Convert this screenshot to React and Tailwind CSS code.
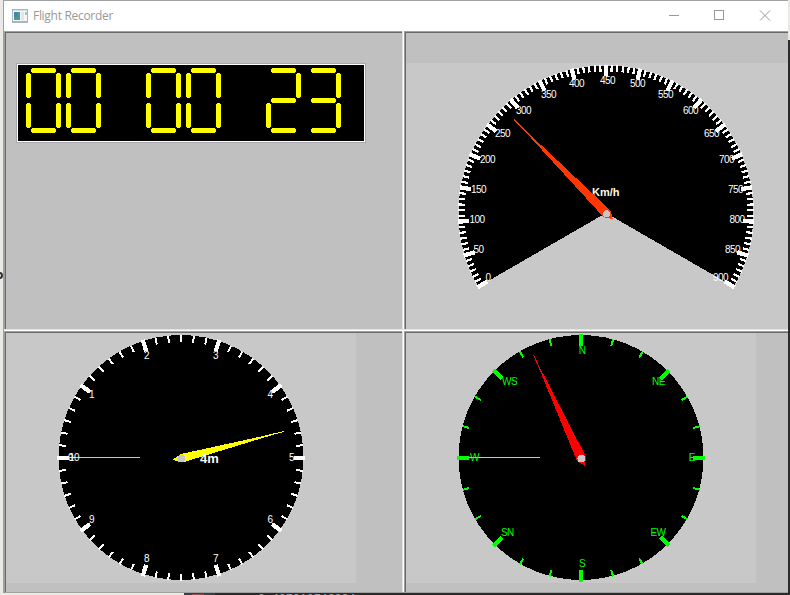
import React from "react";

const rad = (deg) => (deg * Math.PI) / 180;

// Angles are measured clockwise from "pointing left".
function polar(cx, cy, r, deg) {
  return [cx - r * Math.cos(rad(deg)), cy - r * Math.sin(rad(deg))];
}

function Ticks({ cx, cy, start, step, count, every, color, minor, major, minorWidth = 2 }) {
  return Array.from({ length: count }, (_, i) => {
    const isMajor = i % every === 0;
    const a = start + i * step;
    const [outer, inner] = isMajor ? major : minor;
    const [x1, y1] = polar(cx, cy, outer, a);
    const [x2, y2] = polar(cx, cy, inner, a);
    return (
      <line key={i} x1={x1} y1={y1} x2={x2} y2={y2} stroke={color} strokeWidth={isMajor ? 4.3 : minorWidth} />
    );
  });
}

function Labels({ items, color }) {
  return items.map(([text, x, y]) => (
    <text key={text} x={x} y={y} fill={color} className="text-[10px] tracking-[-0.56px]">
      {text}
    </text>
  ));
}

const FONT = "font-['Liberation_Sans',Arial,sans-serif]";

const SPEED_LABELS = [
  ["0", 485.5, 281], ["50", 473.5, 253], ["100", 469.5, 223], ["150", 471, 193],
  ["200", 480, 163], ["250", 495, 137], ["300", 516, 114], ["350", 541, 98],
  ["400", 569, 87], ["450", 600, 84], ["500", 630, 87], ["550", 658, 98],
  ["600", 683, 114], ["650", 704, 137], ["700", 719, 163], ["750", 728, 193],
  ["800", 729.5, 223], ["850", 725, 253], ["900", 713, 281],
];

const ALT_LABELS = [
  ["0", 68, 461], ["1", 89, 398], ["2", 144, 359], ["3", 213, 359],
  ["4", 267.5, 398], ["5", 289, 461], ["6", 267.5, 523], ["7", 213, 562],
  ["8", 144, 562], ["9", 89, 523], ["10", 69, 461],
];

const COMPASS_LABELS = [
  ["N", 578.7, 354], ["NE", 652, 385], ["E", 688.7, 461], ["EW", 650.5, 536],
  ["S", 579, 567], ["SN", 501, 536], ["WS", 502, 385], ["W", 470, 461],
];

function SpeedGauge() {
  const cx = 606, cy = 213, r = 147.5;
  const [ax, ay] = polar(cx, cy, r, -30);
  const [bx, by] = polar(cx, cy, r, 210);
  return (
    <svg viewBox="406 63 382 266" className={`block w-[382px] h-[266px] bg-[#c8c8c8] ${FONT}`}>
      <g shapeRendering="crispEdges">
        <path d={`M${cx} ${cy}L${ax} ${ay}A${r} ${r} 0 1 1 ${bx} ${by}Z`} fill="#000" />
        <Ticks
          cx={cx} cy={cy} start={-30} step={240 / 108} count={109} every={6}
          color="#fff" major={[148.5, 137]} minor={[148, 141.5]} minorWidth={2.2}
        />
      </g>
      <Labels items={SPEED_LABELS} color="#fff" />
      <text x="592" y="196" fill="#fffbe6" fontSize="11" fontWeight="bold">Km/h</text>
      <g shapeRendering="crispEdges">
        <path d="M514 119.5L540 146" stroke="#ff3700" />
        <path d="M514 119.5L610.5 210.5L613 219.5L603 216.5Z" fill="#ff3700" />
        <circle cx="606.5" cy="213.5" r="4" fill="#c8c8c8" stroke="#ff3700" strokeWidth="1" />
      </g>
    </svg>
  );
}

function AltitudeGauge() {
  return (
    <svg viewBox="6 333 350 250" className={`block w-[350px] h-[250px] bg-[#c8c8c8] ${FONT}`}>
      <g shapeRendering="crispEdges">
        <circle cx="181" cy="457.5" r="122.5" fill="#000" />
        <Ticks
          cx={181} cy={458} start={0} step={6} count={60} every={6}
          color="#fff" major={[124, 112.5]} minor={[122.7, 116]}
        />
        <rect x="68" y="457" width="72" height="1" fill="#c8c8c8" />
      </g>
      <Labels items={ALT_LABELS} color="#fff" />
      <g shapeRendering="crispEdges">
        <path d="M260 437.2L284 431.5" stroke="#ffff00" />
        <path d="M172 460L181 454L284 431.5L184 462Z" fill="#ffff00" />
        <circle cx="181.5" cy="458.5" r="4" fill="#c8c8c8" />
      </g>
      <text x="200" y="463" fill="#fff" fontSize="13" fontWeight="bold">4m</text>
    </svg>
  );
}

function Compass() {
  return (
    <svg viewBox="406 333 350 250" className={`block w-[350px] h-[250px] bg-[#c8c8c8] ${FONT}`}>
      <g shapeRendering="crispEdges">
        <circle cx="581" cy="457.5" r="122.5" fill="#000" />
        <Ticks
          cx={581.3} cy={458} start={0} step={15} count={24} every={3}
          color="#00ff00" major={[124, 112]} minor={[122.7, 116]}
        />
        <rect x="468" y="457" width="72" height="1" fill="#c8c8c8" />
      </g>
      <Labels items={COMPASS_LABELS} color="#00ff00" />
      <g shapeRendering="crispEdges">
        <path d="M533.5 355L545 380" stroke="#ff0000" />
        <path d="M533.5 355L586 457L585 466L577 461Z" fill="#ff0000" />
        <circle cx="581.5" cy="458.5" r="4" fill="#c8c8c8" />
      </g>
    </svg>
  );
}

const SEGMENTS = {
  a: [5, 0, true], b: [30, 5, false], c: [30, 35, false], d: [5, 60, true],
  e: [0, 35, false], f: [0, 5, false], g: [5, 30, true],
};
const DIGITS = { 0: "abcdef", 2: "abged", 3: "abgcd" };

function segmentPath(x, y, horizontal) {
  const w = horizontal ? 25 : 5;
  const h = horizontal ? 5 : 25;
  return `M${x + 1} ${y}h${w - 2}v1h1v${h - 2}h-1v1h-${w - 2}v-1h-1v-${h - 2}h1Z`;
}

function Clock({ value }) {
  return (
    <div className="mt-[30px] ml-[10px] w-[350px] h-[80px] border border-[#a8a8ac]">
      <div className="h-full border border-white bg-black">
        <svg viewBox="18 65 346 76" className="block w-[346px] h-[76px]" shapeRendering="crispEdges">
          {value.split("").map((ch, i) =>
            (DIGITS[ch] || "").split("").map((s) => {
              const [x, y, horizontal] = SEGMENTS[s];
              return <path key={i + s} d={segmentPath(26 + i * 40 + x, 68 + y, horizontal)} fill="#ffff00" />;
            })
          )}
        </svg>
      </div>
    </div>
  );
}

function Panel({ children, className }) {
  return (
    <div className={`border-t border-l border-[#a0a0a0] overflow-hidden ${className}`}>
      <div className="h-full border-t border-l border-[#696969] bg-[#c0c0c0] overflow-hidden">{children}</div>
    </div>
  );
}

function Divider({ vertical }) {
  return vertical ? (
    <div className="w-[2px] bg-white border-l border-[#e3e3e3]" />
  ) : (
    <div className="h-[2px] bg-white border-t border-[#e3e3e3]" />
  );
}

function TitleBar() {
  return (
    <div className="h-[30px] bg-white flex items-center">
      <svg viewBox="0 0 16 14" className="ml-2 w-4 h-[14px]" shapeRendering="crispEdges">
        <rect width="16" height="14" fill="#a9b4bc" />
        <rect x="1" y="1" width="14" height="1" fill="#d5dce2" />
        <rect x="1" y="2" width="14" height="10" fill="#f4f6f8" />
        <rect x="2" y="3" width="6" height="8" fill="#4a9a8c" />
        <rect x="2" y="3" width="3" height="5" fill="#4583ae" />
        <rect x="9" y="3" width="3" height="8" fill="#e2e5e8" />
        <rect x="13" y="3" width="2" height="3" fill="#a7c8b4" />
      </svg>
      <span className="ml-[5px] text-[12px] leading-none text-[#999] font-['Open_Sans','Noto_Sans',sans-serif] tracking-[-0.3px]">
        Flight Recorder
      </span>
      <svg viewBox="668 1 120 30" className="ml-auto w-[120px] h-[30px]" fill="none" stroke="#999">
        <path d="M669 15.5h10" />
        <rect x="714.5" y="10.5" width="9" height="9" />
        <path d="M760 10.5l10 10M770 10.5l-10 10" />
      </svg>
    </div>
  );
}

export default function App() {
  return (
    <div className="w-[790px] h-[595px] flex overflow-hidden bg-[#2b2b2b]">
      <div className="w-[3px] bg-[#e9e9e5] flex flex-col overflow-hidden">
        <div className="mt-[272px] -ml-1 w-[7px] h-[7px] rounded-full border-2 border-[#333]" />
      </div>
      <div className="w-[785px] flex flex-col">
        <div className="h-[593px] border-t border-l border-b border-[#a0a0a0] flex flex-col">
          <TitleBar />
          <div className="flex flex-col h-[561px]">
            <div className="flex h-[298px]">
              <Panel className="w-[398px]">
                <Clock value="00 00 23" />
              </Panel>
              <Divider vertical />
              <Panel className="w-[384px]">
                <div className="pt-[30px]">
                  <SpeedGauge />
                </div>
              </Panel>
            </div>
            <Divider />
            <div className="flex h-[261px]">
              <Panel className="w-[398px]">
                <AltitudeGauge />
              </Panel>
              <Divider vertical />
              <Panel className="w-[384px]">
                <Compass />
              </Panel>
            </div>
          </div>
        </div>
        <div className="h-[2px] flex overflow-hidden bg-[#2b2b2b]">
          <div className="w-[181px] bg-[#e9e9e5]" />
          <div className="w-[31px] bg-[#3c3f41] pl-2 pt-px">
            <div className="w-3 h-px bg-[#a04a46]" />
          </div>
          <div className="ml-[43px] -mt-px text-[11.6px] leading-[11px] whitespace-nowrap text-[#a9a9a9] font-['Liberation_Mono',monospace]">
            0.407010746004
          </div>
        </div>
      </div>
      <div className="w-[2px] flex flex-col">
        <div className="h-[40px] bg-[#e9e9e5]" />
        <div className="grow bg-[#2b2b2b]" />
      </div>
    </div>
  );
}
